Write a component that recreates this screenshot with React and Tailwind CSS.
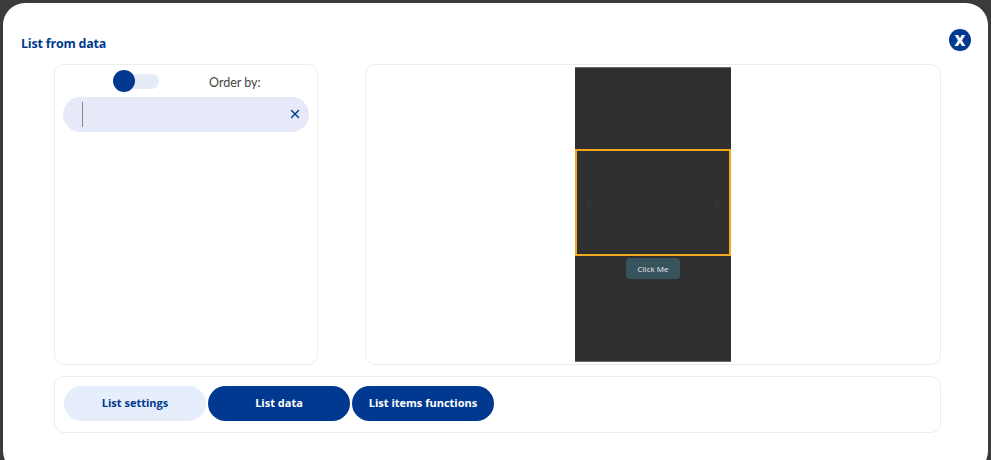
import { X, ChevronLeft, ChevronRight } from "lucide-react";

const tabs = [
  { label: "List settings", active: false },
  { label: "List data", active: true },
  { label: "List items functions", active: true },
];

export default function App() {
  return (
    <div className="h-[460px] w-[991px] overflow-hidden bg-[#3b3b3b] p-[3px] font-['Lato',sans-serif]">
      <div className="flex h-[470px] flex-col rounded-[22px] bg-white">
        {/* Header */}
        <div className="flex h-[48px] items-center justify-between pl-[18px] pr-[17px] pt-[26px]">
          <h1 className="mt-[6px] font-['Open_Sans',sans-serif] text-[12.5px] font-bold leading-[13px] tracking-[-0.2px] text-[#00398f]">
            List from data
          </h1>
          <button className="flex h-[22px] w-[22px] items-center justify-center rounded-full bg-[#00398f] font-['Open_Sans',sans-serif] text-[15px] font-extrabold leading-none text-white">
            X
          </button>
        </div>

        {/* Panels */}
        <div className="ml-[51px] mr-[47px] mt-[13px] flex gap-[47px]">
          <div className="h-[301px] w-[264px] rounded-[10px] border border-[#ededed] px-[8px] pt-[5px]">
            <div className="flex items-center">
              <div className="relative ml-[50px] h-[22px] w-[46px]">
                <div className="absolute left-[1px] top-[4px] h-[15px] w-[45px] rounded-full bg-[#e6ebf8]" />
                <div className="absolute left-0 top-0 h-[22px] w-[22px] rounded-full bg-[#00398f]" />
              </div>
              <span className="ml-[50px] mt-[4px] text-[12.5px] text-[#444]">Order by:</span>
            </div>
            <div className="mt-[4px] flex h-[35px] items-center rounded-full bg-[#e5e9f8] pl-[19px] pr-[7px]">
              <div className="h-[25px] w-px bg-[#8a8a8a]" />
              <X className="ml-auto h-[14px] w-[14px] text-[#00398f]" strokeWidth={2.5} />
            </div>
          </div>

          <div className="h-[301px] flex-1 rounded-[10px] border border-[#ededed]">
            <div className="ml-[209px] mt-[2px] flex h-[295px] w-[156px] flex-col border-b border-t border-[#6a6a6a] bg-[#303030]">
              <div className="h-[81px]" />
              <div className="flex h-[107px] items-center justify-between border-2 border-[#f2a81d] px-[6px] text-[#3a4452]">
                <ChevronLeft className="h-[12px] w-[12px]" strokeWidth={2} />
                <ChevronRight className="h-[12px] w-[12px]" strokeWidth={2} />
              </div>
              <div className="mt-[2px] flex justify-center">
                <span className="flex h-[21px] w-[54px] items-center justify-center rounded-[4px] bg-[#37535c] font-['Open_Sans',sans-serif] text-[8px] text-[#e8edf0]">
                  Click Me
                </span>
              </div>
            </div>
          </div>
        </div>

        {/* Tabs */}
        <div className="ml-[51px] mr-[47px] mt-[11px] flex h-[57px] gap-[2px] rounded-[10px] border border-[#ededed] pl-[9px] pt-[9px]">
          {tabs.map((tab) => (
            <button
              key={tab.label}
              className={
                tab.active
                  ? "h-[35px] w-[142px] rounded-full bg-[#00398f] font-['Open_Sans',sans-serif] text-[11px] font-bold text-white"
                  : "h-[35px] w-[142px] rounded-full bg-[#e6edfb] font-['Open_Sans',sans-serif] text-[11px] font-bold text-[#00398f]"
              }
            >
              {tab.label}
            </button>
          ))}
        </div>
      </div>
    </div>
  );
}
